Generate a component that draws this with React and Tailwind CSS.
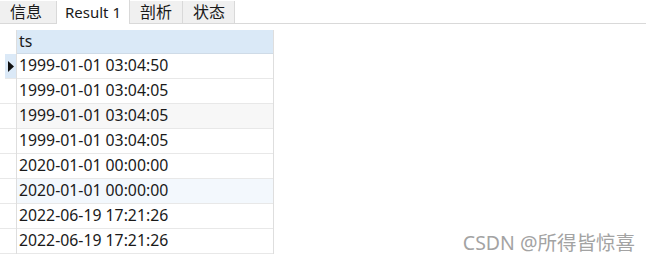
const rows = [
  { v: "1999-01-01 03:04:50", bg: "bg-white", current: true },
  { v: "1999-01-01 03:04:05", bg: "bg-white" },
  { v: "1999-01-01 03:04:05", bg: "bg-[#f7f7f7]" },
  { v: "1999-01-01 03:04:05", bg: "bg-white" },
  { v: "2020-01-01 00:00:00", bg: "bg-white" },
  { v: "2020-01-01 00:00:00", bg: "bg-[#f3f8fd]" },
  { v: "2022-06-19 17:21:26", bg: "bg-white" },
  { v: "2022-06-19 17:21:26", bg: "bg-white" },
];

const tabs = [
  { label: "信息", w: "w-[57px]" },
  { label: "Result 1", w: "w-[73px]", active: true },
  { label: "剖析", w: "w-[53px]" },
  { label: "状态", w: "w-[52px]" },
];

export default function App() {
  return (
    <div className="relative h-[261px] w-[646px] overflow-hidden bg-white font-['Microsoft_YaHei','Noto_Sans','Noto_Sans_CJK_SC',sans-serif] text-[15.8px] text-[#1a1a1a]">
      <div className="flex h-[24px] border-b border-[#d9d9d9]">
        {tabs.map((t) => (
          <div
            key={t.label}
            className={`${t.w} flex items-center border-r border-[#d9d9d9] ${
              t.active ? "-mb-px h-[24px] bg-white pl-[8px] text-[15px]" : "mt-[1px] bg-[#f0f0f0] pl-[10px] text-[16px]"
            }`}
          >
            {t.label}
          </div>
        ))}
      </div>

      <div className="mt-[6px] flex">
        <div className="w-[16px] pt-[24px]">
          {rows.map((r, i) => (
            <div
              key={i}
              className={`flex h-[25px] items-center border-b border-[#e8e8e8] ${
                r.current ? "ml-[5px] bg-[#dbe9f7] pl-[3px]" : ""
              }`}
            >
              {r.current && (
                <svg className="shrink-0" width="6" height="11" viewBox="0 0 6 11">
                  <path d="M0 0 L6 5.5 L0 11 Z" fill="#111" />
                </svg>
              )}
            </div>
          ))}
        </div>
        <div className="w-[258px] border-l border-r border-[#dedede]">
          <div className="flex h-[24px] items-center border-b border-[#cfdbe7] bg-[#dae9f7] pl-[2px]">ts</div>
          {rows.map((r, i) => (
            <div key={i} className={`flex h-[25px] items-center border-b border-[#e8e8e8] pl-[2px] ${r.bg}`}>
              {r.v}
            </div>
          ))}
        </div>
      </div>

      <div className="absolute right-[11px] bottom-[4px] text-[19.5px] text-[#a3a3a3] [text-shadow:0_0_1px_#fff]">
        CSDN @所得皆惊喜
      </div>
    </div>
  );
}
